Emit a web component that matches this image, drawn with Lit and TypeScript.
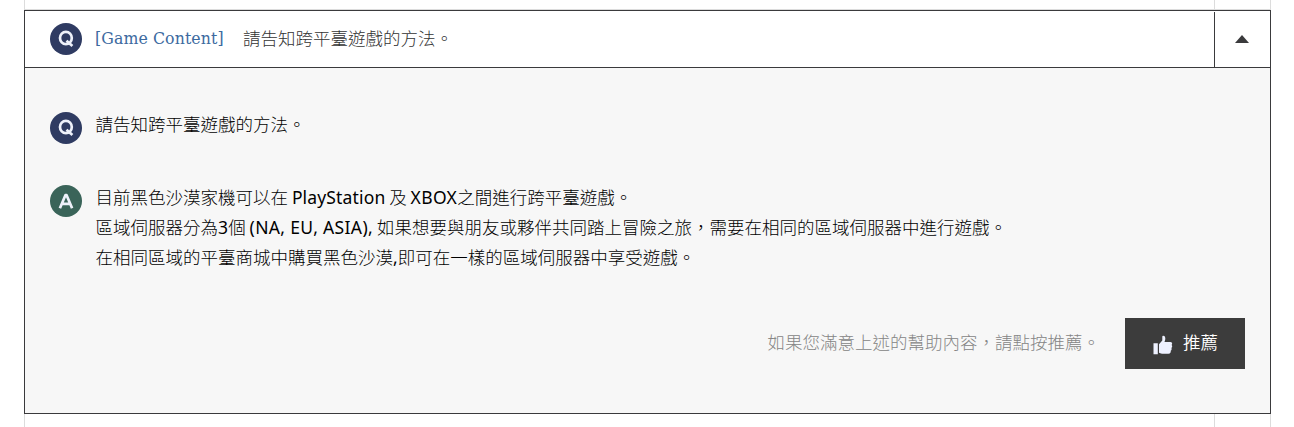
import { LitElement, css, html, svg } from 'lit'

const badgeLetters = {
  q: svg`
    <ellipse cx="15.9" cy="15" rx="5.9" ry="6.2" />
    <path d="M16.500 17.800 22.400 23" />
  `,
  a: svg`<path d="M9.900 23.200 15.400 10.200h1.200l5.500 13M12 18.900h8" />`,
}

export class FaqBadge extends LitElement {
  static properties = {
    kind: { type: String },
  }

  declare kind: 'q' | 'a'

  static styles = css`
    :host {
      display: block;
      flex: none;
      width: 32px;
      height: 32px;
    }

    svg {
      display: block;
    }

    .q {
      fill: #2f3b62;
    }

    .a {
      fill: #3a6459;
    }

    .letter {
      fill: none;
      stroke: #eef1fa;
      stroke-width: 2.7;
      stroke-linejoin: round;
    }
  `

  render() {
    return html`
      <svg width="32" height="32" viewBox="0 0 32 32" aria-hidden="true">
        <circle class=${this.kind} cx="16" cy="16" r="16" />
        <g class="letter">${badgeLetters[this.kind]}</g>
      </svg>
    `
  }
}

customElements.define('faq-badge', FaqBadge)

export class AppRoot extends LitElement {
  static properties = {
    open: { state: true },
  }

  declare open: boolean

  static styles = css`
    :host {
      display: block;
      box-sizing: border-box;
      height: 427px;
      padding: 0 23px 0 24px;
      overflow: hidden;
      background: #fff;
      color: #000;
      font-family: "Noto Sans CJK TC", sans-serif;
      font-size: 17.5px;
      font-weight: 300;
      line-height: 30px;
      white-space: nowrap;
    }

    * {
      box-sizing: border-box;
    }

    .neighbour {
      display: flex;
      justify-content: flex-end;
      height: 10px;
      border: 1px solid #dcdcdc;
      border-top: 0;
    }

    .neighbour.next {
      height: 13px;
      border-bottom: 0;
    }

    .neighbour .cell {
      width: 56px;
      border-left: 1px solid #dcdcdc;
    }

    .item {
      border: 1px solid #3a3a3c;
    }

    .question {
      display: flex;
      height: 57px;
      border-bottom: 1px solid #3a3a3c;
    }

    .title {
      display: flex;
      flex: 1;
      align-items: flex-start;
      padding: 12px 0 0 25px;
      color: #333;
    }

    .category {
      width: 148px;
      margin-left: 13px;
      color: #3c6a9f;
      font-family: "DejaVu Serif Condensed", "DejaVu Serif", serif;
      font-size: 17.5px;
      font-stretch: condensed;
      font-weight: 400;
      letter-spacing: 0.1px;
      line-height: 31px;
    }

    .subject {
      line-height: 29px;
    }

    .latin {
      font-family: "Noto Sans", sans-serif;
      font-weight: 400;
      letter-spacing: 0.15px;
      line-height: 1;
    }

    .wide {
      letter-spacing: 0.35px;
    }

    .toggle {
      display: flex;
      align-items: center;
      justify-content: center;
      width: 56px;
      margin: 1px 0 0;
      padding: 0 1px 2px 0;
      border: 0;
      border-left: 1px solid #3a3a3c;
      background: none;
      cursor: pointer;
    }

    .content {
      height: 345px;
      padding: 44px 25px 0;
      background: #f7f7f7;
    }

    .row {
      display: flex;
      gap: 13.5px;
    }

    .row + .row {
      margin-top: 41px;
    }

    .row p {
      margin: -3px 0 0;
    }

    .recommend {
      display: flex;
      align-items: center;
      justify-content: flex-end;
      gap: 25px;
      margin-top: 46px;
      color: #858585;
    }

    .recommend p {
      margin: 0 0 4px;
    }

    .like {
      display: flex;
      align-items: center;
      gap: 10px;
      width: 120px;
      height: 51px;
      padding: 0 0 4px 28px;
      border: 0;
      background: #3c3c3c;
      color: #fff;
      font: inherit;
      font-weight: 350;
      cursor: pointer;
    }

    .like svg {
      margin-top: 6px;
    }
  `

  constructor() {
    super()
    this.open = true
  }

  private toggle() {
    this.open = !this.open
  }

  private renderContent() {
    return html`
      <div class="content">
        <div class="row">
          <faq-badge kind="q"></faq-badge>
          <p>請告知跨平臺遊戲的方法。</p>
        </div>
        <div class="row">
          <faq-badge kind="a"></faq-badge>
          <p>
            目前黑色沙漠家機可以在 <span class="latin">PlayStation</span> 及 <span class="latin wide">XBOX</span>之間進行跨平臺遊戲。<br />
            區域伺服器分為<span class="latin">3</span>個 <span class="latin wide">(NA, EU, ASIA),</span> 如果想要與朋友或夥伴共同踏上冒險之旅，需要在相同的區域伺服器中進行遊戲。<br />
            在相同區域的平臺商城中購買黑色沙漠<span class="latin">,</span>即可在一樣的區域伺服器中享受遊戲。
          </p>
        </div>
        <div class="recommend">
          <p>如果您滿意上述的幫助內容，請點按推薦。</p>
          <button class="like" type="button">
            <svg width="20" height="20" viewBox="0 0 20 20" fill="#eef1ff" aria-hidden="true">
              <path d="M.5 8.2h4.300v11H.5zM6 9.200 9.300 5.600V1.800C9.300.2 12.300.3 12.300 3.400c0 1.500-.5 2.700-.8 3.600h5.800c2 0 2.400 2 1.300 3 .9.8.8 2.200-.2 2.900.6 1 .2 2.200-.7 2.800.4 1.500-.4 3-2.200 3H9c-1.500 0-2-.8-3-.9z" />
            </svg>
            推薦
          </button>
        </div>
      </div>
    `
  }

  render() {
    return html`
      <div class="neighbour"><div class="cell"></div></div>
      <div class="item">
        <div class="question">
          <div class="title">
            <faq-badge kind="q"></faq-badge>
            <span class="category">[Game Content]</span>
            <span class="subject">請告知跨平臺遊戲的方法。</span>
          </div>
          <button
            class="toggle"
            type="button"
            aria-label="Toggle answer"
            aria-expanded=${String(this.open)}
            @click=${this.toggle}
          >
            <svg width="14" height="8" viewBox="0 0 14 8" fill="#3a3a3c">
              <path d=${this.open ? 'M0 8 7 0l7 8z' : 'M0 0l7 8 7-8z'} />
            </svg>
          </button>
        </div>
        ${this.open ? this.renderContent() : null}
      </div>
      <div class="neighbour next"><div class="cell"></div></div>
    `
  }
}

customElements.define('app-root', AppRoot)
